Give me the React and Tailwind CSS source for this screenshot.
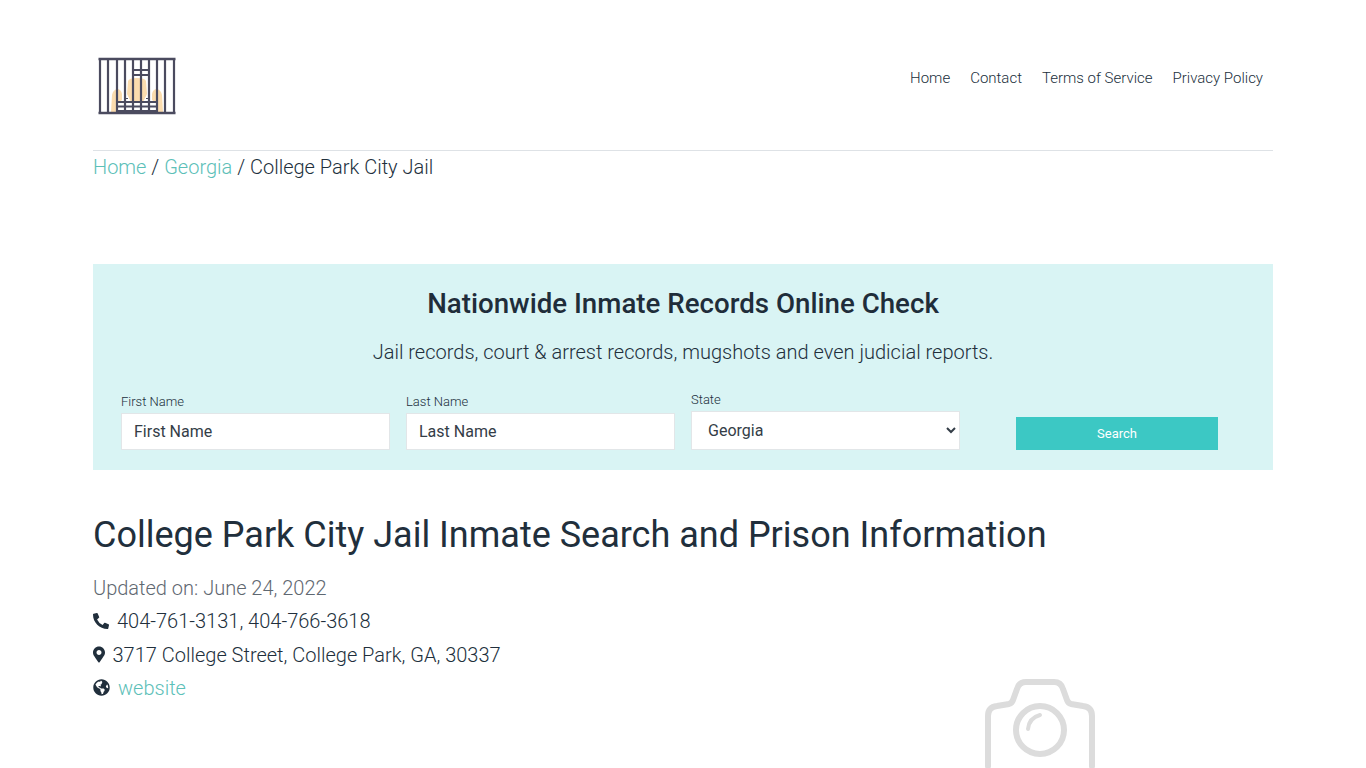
import { FaPhoneAlt, FaMapMarkerAlt, FaGlobeAmericas } from 'react-icons/fa';

function JailLogo() {
    const bars = [100, 108, 117, 125, 133, 141, 149, 157, 165, 174];
    return (
        <svg width="90" height="70" viewBox="93 50 90 70">
            <path d="M111 112l1-17q1-5 5-6q4 0 5 5v6l-4 3v9z" fill="#fbdcae" />
            <path d="M163 112l-1-17q-1-5-5-6q-4 0-5 5v6l4 3v9z" fill="#fbdcae" />
            <path d="M127 94l1-13q1-3 9-3t9 3l1 13l-4 8h-12z" fill="#fbdcae" />
            <g stroke="#4b4b5f" strokeWidth="2.200" fill="none">
                <path d="M98.500 59h77M98.500 113h77" strokeWidth="2.600" />
                {bars.map((x) => (
                    <path key={x} d={`M${x} 59v54`} />
                ))}
                <path d="M132 70h17M132 75h17M117 102h40M117 106.500h40M117 111h40" strokeWidth="1.800" />
                <path d="M125 98.500h3M146 98.500h3" strokeWidth="1.200" />
            </g>
        </svg>
    );
}

function CameraIcon() {
    return (
        <svg width="110" height="92" viewBox="0 0 110 92" fill="none" stroke="#dcdcdc" strokeWidth="6" strokeLinecap="round" strokeLinejoin="round">
            <path d="M3 88V38q0-9 9-10l12-2q3-1 4-4l4-11q2-7 9-7h28q7 0 9 7l4 11q1 3 4 4l12 2q9 1 9 10v50" />
            <circle cx="55" cy="52" r="24" />
            <path d="M43 51q1-11 12-14" strokeWidth="4" />
        </svg>
    );
}

function Field({ label, placeholder }) {
    return (
        <div className="flex-1">
            <label className="block text-[13px] font-light leading-[18px] mb-[2px]">{label}</label>
            <input
                placeholder={placeholder}
                className="block w-full h-[37px] px-[12px] bg-white border border-[#e2e6e8] text-base text-[#343d47] placeholder:text-[#343d47] outline-none"
            />
        </div>
    );
}

export default function App() {
    return (
        <div className="bg-white h-[768px] overflow-hidden text-[#212f3c] font-['Roboto',sans-serif]">
            <div className="w-[1180px] mx-auto">
                <header className="flex justify-between items-start h-[151px] border-b border-[#dee2e6] pt-[50px]">
                    <JailLogo />
                    <nav className="flex gap-5 pt-[18px] pr-[10px] text-[15px] font-light leading-[20px] text-[#212f3c]">
                        <a href="#">Home</a>
                        <a href="#">Contact</a>
                        <a href="#">Terms of Service</a>
                        <a href="#">Privacy Policy</a>
                    </nav>
                </header>

                <div className="text-xl font-light leading-[30px] mt-[1px]">
                    <a href="#" className="text-[#5cc0b8]">Home</a> / <a href="#" className="text-[#5cc0b8]">Georgia</a> / College Park City Jail
                </div>

                <section className="bg-[#d9f4f4] h-[206px] mt-[82px] pt-[22px] px-[28px]">
                    <h2 className="text-[27.7px] font-medium leading-[36px] text-center text-[#1f2d3a]">Nationwide Inmate Records Online Check</h2>
                    <p className="text-xl font-light leading-[30px] text-center mt-[15px]">Jail records, court &amp; arrest records, mugshots and even judicial reports.</p>
                    <div className="flex items-end gap-4 mt-[24px]">
                        <div className="w-[269px]"><Field label="First Name" placeholder="First Name" /></div>
                        <div className="w-[269px]"><Field label="Last Name" placeholder="Last Name" /></div>
                        <div className="w-[269px]">
                            <label className="block text-[13px] font-light leading-[18px] mb-[2px]">State</label>
                            <select className="block w-full h-[39px] pl-[12px] bg-white border border-[#e2e6e8] text-base text-[#343d47] outline-none">
                                <option>Georgia</option>
                            </select>
                        </div>
                        <button className="w-[202px] h-[33px] ml-10 bg-[#3cc8c4] text-white text-[13px] font-normal">Search</button>
                    </div>
                </section>

                <h1 className="text-[36px] font-normal leading-[42px] mt-[44px] text-[#212f3c]">College Park City Jail Inmate Search and Prison Information</h1>

                <div className="text-xl font-light leading-[33.4px] mt-[16px]">
                    <div className="text-[#5f6871]">Updated on: June 24, 2022</div>
                    <div className="flex items-center gap-2">
                        <FaPhoneAlt className="text-[#212f3c] w-4 h-4 -mt-[2px]" />
                        <span>404-761-3131, 404-766-3618</span>
                    </div>
                    <div className="flex items-center gap-2">
                        <FaMapMarkerAlt className="text-[#212f3c] w-[12px] h-[17px] -mt-[2px]" />
                        <span className="-ml-[0.5px]">3717 College Street, College Park, GA, 30337</span>
                    </div>
                    <div className="flex items-center gap-2">
                        <FaGlobeAmericas className="text-[#212f3c] w-[17px] h-[17px] -mt-[2px]" />
                        <a href="#" className="text-[#5cc0b8]">website</a>
                    </div>
                </div>

                <div className="flex justify-end pr-[178px] -mt-[28px]">
                    <CameraIcon />
                </div>
            </div>
        </div>
    );
}
